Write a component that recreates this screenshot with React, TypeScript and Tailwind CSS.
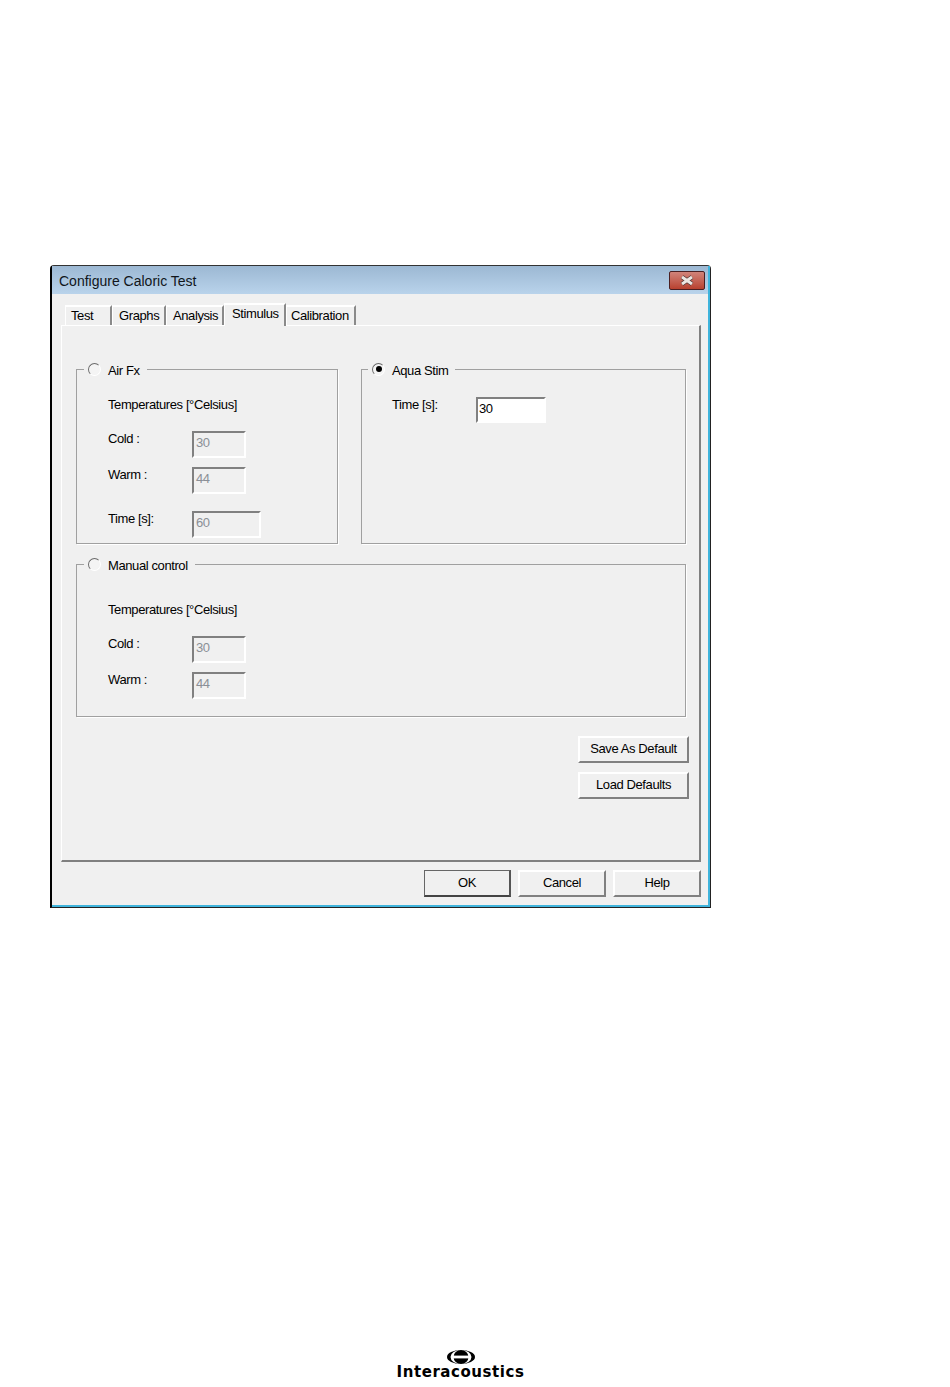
const fieldInset = "border-2 border-t-[#808080] border-l-[#808080] border-r-white border-b-white";
const raised = "border-2 border-t-white border-l-white border-r-[#808080] border-b-[#808080]";
const groupBox = "relative border border-[#a0a0a0] shadow-[1px_1px_0_#ffffff]";

function Radio({ checked }: { checked?: boolean }) {
  return (
    <span className="w-[13px] h-[13px] -mt-[2px] rounded-full border border-t-[#6a6a6a] border-l-[#6a6a6a] border-r-white border-b-white bg-[#f4f4f4] flex items-center justify-center shrink-0">
      {checked && <span className="w-[6px] h-[6px] rounded-full bg-black" />}
    </span>
  );
}

function Legend({
  label,
  checked,
  className,
}: {
  label: string;
  checked?: boolean;
  className?: string;
}) {
  return (
    <div
      className={`absolute -top-[7px] h-[14px] flex items-center gap-[7px] px-1 pr-[7px] bg-[#f0f0f0] ${className ?? "left-[7px]"}`}
    >
      <Radio checked={checked} />
      <span className="leading-4 pt-[2px]">{label}</span>
    </div>
  );
}

function Field({
  label,
  value,
  wide,
  className,
}: {
  label: string;
  value: string;
  wide?: boolean;
  className?: string;
}) {
  return (
    <div className={`flex items-start ${className ?? ""}`}>
      <span className="w-[84px] leading-4">{label}</span>
      <div
        className={`${wide ? "w-[69px]" : "w-[54px]"} h-[27px] ${fieldInset} pl-[2px] pt-[2px] text-[#8a8f96] leading-4`}
      >
        {value}
      </div>
    </div>
  );
}

function Tab({
  label,
  width,
  inset,
  active,
}: {
  label: string;
  width: string;
  inset: string;
  active?: boolean;
}) {
  return (
    <div
      className={`${width} ${inset} ${
        active
          ? "h-[23px] pt-[1px] -mb-[1px] relative z-10 bg-[#f0f0f0]"
          : "h-[20px] pt-[1px]"
      } border-t-2 border-l border-r-2 border-t-white border-l-white border-r-[#8a8a8a] leading-4`}
    >
      {label}
    </div>
  );
}

function DialogButton({
  label,
  width,
  isDefault,
}: {
  label: string;
  width: string;
  isDefault?: boolean;
}) {
  return (
    <button
      className={`${width} h-[27px] pb-px bg-[#f0f0f0] ${
        isDefault
          ? "border border-b-2 border-r-2 border-t-[#666] border-l-[#666] border-r-[#555] border-b-[#444]"
          : raised
      }`}
    >
      {label}
    </button>
  );
}

export default function App() {
  return (
    <div
      className="w-[950px] h-[1387px] overflow-hidden bg-white pt-[265px] pl-[50px] text-[13px] text-black tracking-[-0.4px]"
      style={{ fontFamily: '"Liberation Sans", Arial, sans-serif' }}
    >
      {/* Dialog window */}
      <div className="w-[661px] h-[643px] bg-[#f0f0f0] border-t border-r border-b border-l-2 border-t-[#333] border-r-[#222] border-b-[#222] border-l-black rounded-tl-[4px] rounded-tr-[4px]">
        <div className="h-full flex flex-col border-r-2 border-b-2 border-r-[#3fb4dc] border-b-[#3fb4dc]">
          <div className="h-[28px] shrink-0 flex items-center justify-between pl-[7px] pr-[3px] bg-gradient-to-b from-[#9cb8d3] to-[#b9d3eb]">
            <span className="text-[14px] tracking-[0px] pt-[2px] text-[#10151a]">Configure Caloric Test</span>
            <div className="w-[36px] h-[19px] flex items-center justify-center rounded-[2px] border border-[#4a1f22] bg-gradient-to-b from-[#d0837a] to-[#b8402e]">
              <svg width="18" height="11" viewBox="0 0 18 11">
                <path d="M4 2 L14 9 M14 2 L4 9" stroke="#4a3030" strokeWidth="4.4" />
                <path d="M4 2 L14 9 M14 2 L4 9" stroke="#ece6e2" strokeWidth="3" />
              </svg>
            </div>
          </div>

          <div className="h-[31px] shrink-0 flex items-end pl-[13px]">
            <Tab label="Test" width="w-[47px]" inset="pl-[5px]" />
            <Tab label="Graphs" width="w-[54px]" inset="pl-[6px]" />
            <Tab label="Analysis" width="w-[58px]" inset="pl-[6px]" />
            <Tab label="Stimulus" width="w-[62px]" inset="pl-[7px]" active />
            <Tab label="Calibration" width="w-[70px]" inset="pl-[4px]" />
          </div>

          <div className="ml-[9px] w-[640px] h-[537px] shrink-0 pl-[14px] pt-[43px] border-t border-l border-r-2 border-b-2 border-t-white border-l-white border-r-[#808080] border-b-[#808080]">
            <div className="grid grid-cols-[262px_325px] gap-x-[23px] w-[610px]">
              <div className={`${groupBox} h-[175px] pl-[31px] pt-[27px]`}>
                <Legend label="Air Fx" />
                <div className="h-4 leading-4">Temperatures [°Celsius]</div>
                <Field label="Cold :" value="30" className="mt-[18px]" />
                <Field label="Warm :" value="44" className="mt-[9px]" />
                <Field label="Time [s]:" value="60" wide className="mt-[17px]" />
              </div>
              <div className={`${groupBox} h-[175px] pl-[30px] pt-[27px]`}>
                <Legend label="Aqua Stim" checked className="left-[6px]" />
                <div className="flex items-start">
                  <span className="w-[84px] leading-4">Time [s]:</span>
                  <div className={`w-[70px] h-[26px] bg-white ${fieldInset} pl-px pt-[2px] leading-4`}>30</div>
                </div>
              </div>
            </div>

            <div className={`${groupBox} mt-[20px] w-[610px] h-[153px] pl-[31px] pt-[37px]`}>
              <Legend label="Manual control" />
              <div className="h-4 leading-4">Temperatures [°Celsius]</div>
              <Field label="Cold :" value="30" className="mt-[18px]" />
              <Field label="Warm :" value="44" className="mt-[9px]" />
            </div>

            <div className="mt-[19px] w-[613px] flex flex-col items-end gap-[9px]">
              <DialogButton label="Save As Default" width="w-[111px]" />
              <DialogButton label="Load Defaults" width="w-[111px]" />
            </div>
          </div>

          <div className="mt-[8px] ml-[9px] w-[640px] flex justify-end gap-[7px]">
            <DialogButton label="OK" width="w-[87px]" isDefault />
            <DialogButton label="Cancel" width="w-[88px]" />
            <DialogButton label="Help" width="w-[88px]" />
          </div>
        </div>
      </div>

      {/* Footer logo */}
      <div className="mt-[442px] -ml-[50px] flex flex-col items-center w-[921px]">
        <svg width="28" height="14" viewBox="0 0 28 14">
          <ellipse cx="14" cy="7" rx="14" ry="7" fill="#000" />
          <ellipse cx="14" cy="7" rx="10.5" ry="7" fill="#fff" />
          <ellipse cx="14" cy="7" rx="7.5" ry="7" fill="#000" />
          <rect x="6" y="5.6" width="16" height="2.8" fill="#fff" />
        </svg>
        <span
          className="text-[15px] font-bold leading-[18px] mt-[-1px] tracking-[0.55px] text-black"
          style={{ fontFamily: '"DejaVu Sans", sans-serif' }}
        >
          Interacoustics
        </span>
      </div>
    </div>
  );
}
